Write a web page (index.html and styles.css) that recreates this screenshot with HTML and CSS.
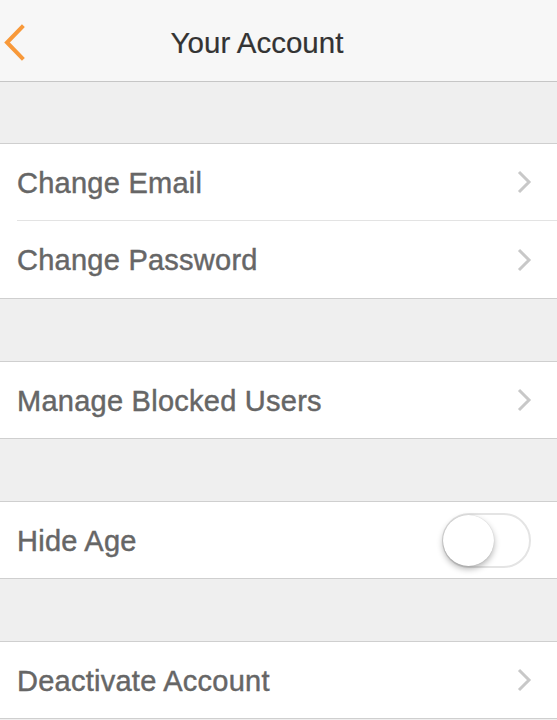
FILE: index.html
```html
<!DOCTYPE html>
<html>
<head>
<meta charset="utf-8">
<link rel="stylesheet" href="styles.css">
</head>
<body>
<div class="screen">
  <header class="navbar">
    <svg class="back" width="30" height="40" viewBox="0 0 30 40"><polyline points="20,4 5,19.5 20,35" fill="none" stroke="#f8993a" stroke-width="4" stroke-linecap="square"/></svg>
    <div class="title">Your Account</div>
  </header>
  <div class="gap first"></div>
  <section class="group">
    <div class="row"><span class="label">Change Email</span><svg class="chev" width="16" height="26" viewBox="0 0 16 26"><polyline points="3,3 13,13 3,23" fill="none" stroke="#c8c8c8" stroke-width="3"/></svg></div>
    <div class="row"><span class="label">Change Password</span><svg class="chev" width="16" height="26" viewBox="0 0 16 26"><polyline points="3,3 13,13 3,23" fill="none" stroke="#c8c8c8" stroke-width="3"/></svg></div>
  </section>
  <div class="gap"></div>
  <section class="group">
    <div class="row"><span class="label">Manage Blocked Users</span><svg class="chev" width="16" height="26" viewBox="0 0 16 26"><polyline points="3,3 13,13 3,23" fill="none" stroke="#c8c8c8" stroke-width="3"/></svg></div>
  </section>
  <div class="gap"></div>
  <section class="group">
    <div class="row"><span class="label">Hide Age</span><div class="toggle"><div class="knob"></div></div></div>
  </section>
  <div class="gap"></div>
  <section class="group">
    <div class="row"><span class="label">Deactivate Account</span><svg class="chev" width="16" height="26" viewBox="0 0 16 26"><polyline points="3,3 13,13 3,23" fill="none" stroke="#c8c8c8" stroke-width="3"/></svg></div>
  </section>
</div>
</body>
</html>
```
FILE: styles.css
```css
* { box-sizing: border-box; }
html, body { margin: 0; padding: 0; }
body {
  background: #efefef;
  font-family: "Liberation Sans", Arial, sans-serif;
  width: 557px;
  height: 720px;
  overflow: hidden;
}
.screen { display: flex; flex-direction: column; }
.navbar {
  height: 82px;
  background: #f7f7f7;
  border-bottom: 1px solid #c6c6c6;
  display: flex;
  align-items: center;
  justify-content: center;
  padding-right: 43px;
  position: relative;
}
.back { position: absolute; left: 2px; top: 23px; }
.title {
  font-size: 29.5px;
  color: #333;
  margin-top: 4px;
  -webkit-text-stroke: 0.2px #333;
}
.gap { height: 62px; background: #efefef; }
.gap.first { height: 61px; }
.group {
  background: #fff;
  border-top: 1px solid #cfcfcf;
  border-bottom: 1px solid #cfcfcf;
}
.row {
  height: 77px;
  margin-left: 17px;
  padding-right: 26px;
  display: flex;
  align-items: center;
  justify-content: space-between;
  border-bottom: 1px solid #e3e3e3;
}
.row:last-child { border-bottom: none; height: 76px; }
.row:nth-child(2):last-child { height: 77px; }
.label {
  font-size: 29px;
  color: #666;
  -webkit-text-stroke: 0.45px #666;
  letter-spacing: 0.25px;
  margin-top: 2px;
}
.chev { margin-right: -1px; }
.toggle {
  width: 89px;
  height: 55px;
  border-radius: 28px;
  border: 2px solid #e4e4e4;
  position: relative;
}
.knob {
  position: absolute;
  left: -1px;
  top: 0px;
  width: 51px;
  height: 51px;
  border-radius: 50%;
  background: #fff;
  box-shadow: 0 3px 6px rgba(0,0,0,0.3), 0 0 1px rgba(0,0,0,0.2);
}
```
